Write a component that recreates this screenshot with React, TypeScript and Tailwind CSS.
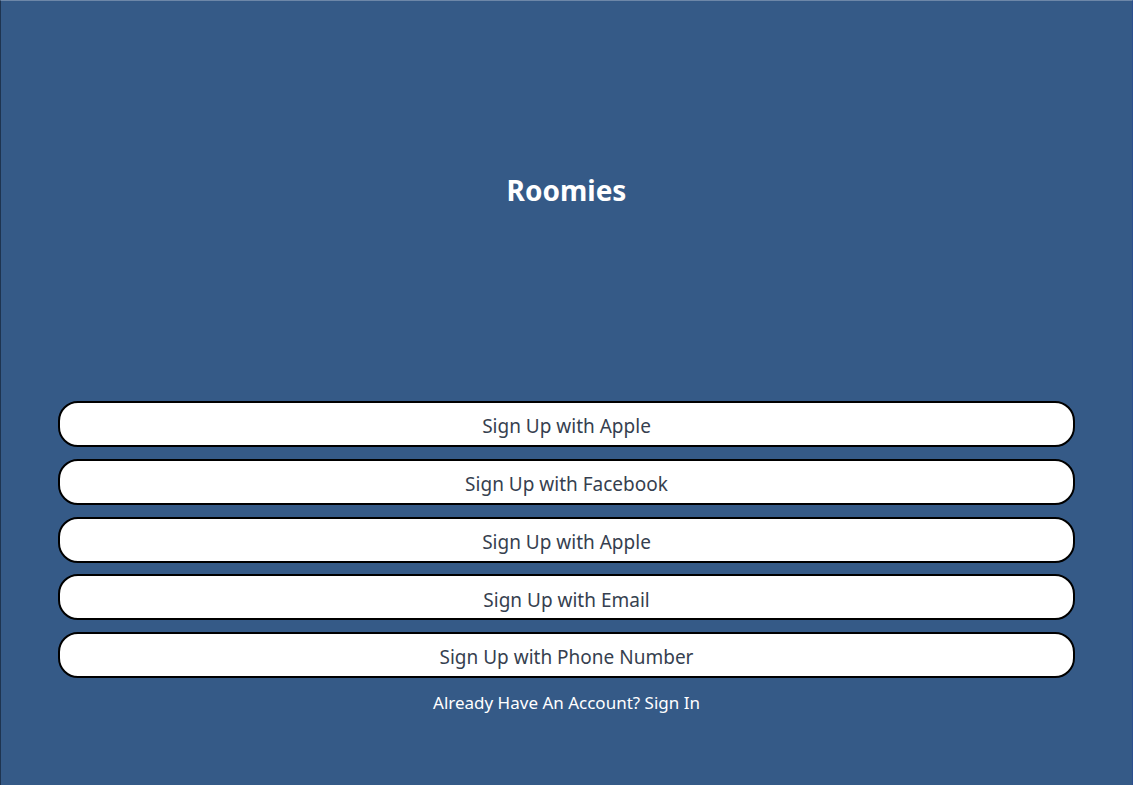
import React from "react";

const options = [
  "Sign Up with Apple",
  "Sign Up with Facebook",
  "Sign Up with Apple",
  "Sign Up with Email",
  "Sign Up with Phone Number",
];

export default function App() {
  return (
    <div
      className="h-[785px] w-full bg-[#355a87] border-l border-[#1e3450] border-t border-t-[#6d87a8] border-r border-r-[#2b4f8f] flex flex-col"
      style={{ fontFamily: '"Noto Sans", "Open Sans", sans-serif' }}
    >
      <h1 className="mt-[170px] text-center text-[28px] leading-[38px] font-bold text-white">
        Roomies
      </h1>

      <div className="mt-[192px] pl-[57px] pr-[57px] flex flex-col gap-[11.75px]">
        {options.map((label, i) => (
          <button
            key={i}
            className="h-[46px] w-full rounded-[20px] border-2 border-black bg-white pt-[5px] text-[19px] text-[#363f4f] text-center"
          >
            {label}
          </button>
        ))}
      </div>

      <p className="mt-[12px] text-center text-[17px] text-white">
        Already Have An Account? Sign In
      </p>
    </div>
  );
}
